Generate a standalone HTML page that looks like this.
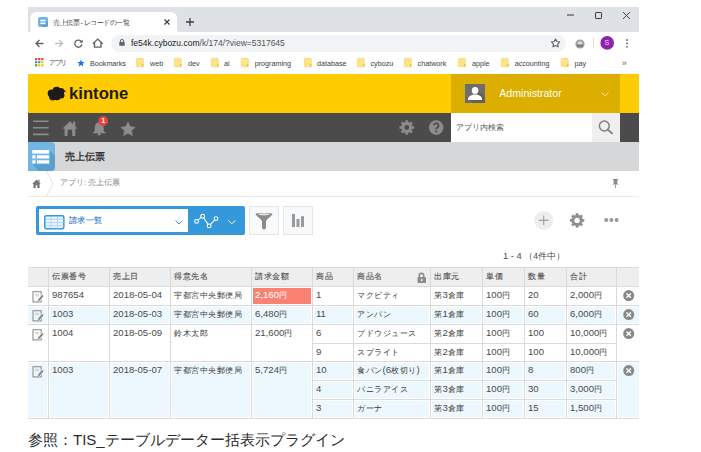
<!DOCTYPE html>
<html><head><meta charset="utf-8">
<style>
*{margin:0;padding:0;box-sizing:border-box}
html,body{width:701px;height:452px;overflow:hidden;background:#fff;font-family:"Liberation Sans",sans-serif}
.a{position:absolute}
.t{position:absolute;white-space:nowrap;line-height:1}
.j{font-size:8.3px;letter-spacing:0.5px}
.d .j{color:#3a3a3a}
.h .j{-webkit-text-stroke:0.12px #505050}
svg{position:absolute;overflow:visible}
</style></head><body>
<div class="a" style="left:28px;top:7px;width:611px;height:25px;background:#dee1e6"></div>
<svg style="left:0px;top:0px" width="1" height="1"><path d="M30.5 32V18A6 6 0 0 1 36.5 12H171A6 6 0 0 1 177 18V28.5A3.5 3.5 0 0 0 180.5 32Z" fill="#fff"/></svg>
<svg style="left:38px;top:17px" width="10" height="10"><rect x="0" y="0" width="10" height="10" rx="2" fill="#6fb4e4"/><path d="M7.6 3L10 5.5V8A2 2 0 0 1 8 10H5L2.4 7.4H7.6Z" fill="#5a9fd0"/><rect x="2.4" y="2.8" width="5.2" height="1.5" fill="#fff"/><rect x="2.4" y="5.6" width="5.2" height="1.5" fill="#fff"/></svg>
<div class="t" style="left:53px;top:18.8px;font-size:7px;color:#3c4043;letter-spacing:-0.5px">売上伝票 - レコードの一覧</div>
<svg style="left:164px;top:19px" width="6" height="6"><path d="M0.5 0.5L5.5 5.5M5.5 0.5L0.5 5.5" stroke="#3c4043" stroke-width="1.2"/></svg>
<svg style="left:186px;top:18px" width="8" height="8"><path d="M4 0V8M0 4H8" stroke="#3c4043" stroke-width="1.3"/></svg>
<svg style="left:567px;top:14px" width="7" height="2"><path d="M0 1H7" stroke="#333" stroke-width="1"/></svg>
<svg style="left:595px;top:12px" width="7" height="7"><rect x="0.5" y="0.5" width="6" height="6" rx="0.6" fill="none" stroke="#3a3a3a" stroke-width="1"/></svg>
<svg style="left:623px;top:12px" width="7" height="7"><path d="M0 0L7 7M7 0L0 7" stroke="#333" stroke-width="0.9"/></svg>
<div class="a" style="left:28px;top:32px;width:611px;height:23px;background:#fff"></div>
<svg style="left:35px;top:39px" width="9" height="9"><path d="M8.5 4.5H1M4.5 1L1 4.5L4.5 8" fill="none" stroke="#5f6368" stroke-width="1.3"/></svg>
<svg style="left:55px;top:39px" width="9" height="9"><path d="M0 4.5H7.5M4 1L7.5 4.5L4 8" fill="none" stroke="#bdc1c6" stroke-width="1.3"/></svg>
<svg style="left:74px;top:39px" width="9" height="9"><path d="M7.6 3A3.6 3.6 0 1 0 7.9 5.5" fill="none" stroke="#5f6368" stroke-width="1.3"/><path d="M8.6 0.5V3.8H5.3Z" fill="#5f6368"/></svg>
<svg style="left:0px;top:0px" width="1" height="1"><path d="M92.9 43.8L97.75 39.1L102.6 43.8M94.5 42.4V47.1H101V42.4" fill="none" stroke="#5f6368" stroke-width="1.35"/></svg>
<div class="a" style="left:111px;top:35px;width:455px;height:17px;background:#f1f3f4;border-radius:8.5px"></div>
<svg style="left:119px;top:39px" width="6" height="7"><path d="M1.4 3V2A1.6 1.6 0 0 1 4.6 2V3" fill="none" stroke="#5f6368" stroke-width="1"/><rect x="0.3" y="3" width="5.4" height="3.8" rx="0.5" fill="#5f6368"/></svg>
<div class="t" style="left:131px;top:39.3px;font-size:8.5px;color:#202124;">fe54k.cybozu.com<span style="color:#50545a">/k/174/?view=5317645</span></div>
<svg style="left:0px;top:0px" width="1" height="1"><path d="M555.60 38.90 L556.95 41.44 L559.78 41.94 L557.79 44.01 L558.19 46.86 L555.60 45.60 L553.01 46.86 L553.41 44.01 L551.42 41.94 L554.25 41.44Z" fill="none" stroke="#5f6368" stroke-width="1.1" stroke-linejoin="round"/></svg>
<svg style="left:575px;top:38.5px" width="10" height="10"><circle cx="5" cy="5" r="4.6" fill="#9aa0a6"/><circle cx="5" cy="4.6" r="2.4" fill="#dcdcdc"/><rect x="2" y="5.5" width="6" height="2" fill="#777"/></svg>
<div class="a" style="left:593px;top:38px;width:1px;height:10px;background:#dadce0"></div>
<svg style="left:0px;top:0px" width="1" height="1"><circle cx="607.2" cy="42.9" r="6.8" fill="#8e24aa"/></svg>
<div class="t" style="left:604.6px;top:39.3px;font-size:7px;color:#efdcf5;">S</div>
<svg style="left:626px;top:39px" width="2" height="9"><circle cx="1" cy="1" r="0.9" fill="#5f6368"/><circle cx="1" cy="4.4" r="0.9" fill="#5f6368"/><circle cx="1" cy="7.8" r="0.9" fill="#5f6368"/></svg>
<div class="a" style="left:28px;top:55px;width:611px;height:19px;background:#fff"></div>
<svg style="left:35px;top:58.3px" width="9" height="9"><rect x="0.0" y="0.0" width="2.2" height="2.2" fill="#ea4335"/><rect x="3.1" y="0.0" width="2.2" height="2.2" fill="#ea4335"/><rect x="6.2" y="0.0" width="2.2" height="2.2" fill="#ea4335"/><rect x="0.0" y="3.1" width="2.2" height="2.2" fill="#34a853"/><rect x="3.1" y="3.1" width="2.2" height="2.2" fill="#4285f4"/><rect x="6.2" y="3.1" width="2.2" height="2.2" fill="#fbbc04"/><rect x="0.0" y="6.2" width="2.2" height="2.2" fill="#34a853"/><rect x="3.1" y="6.2" width="2.2" height="2.2" fill="#fbbc04"/><rect x="6.2" y="6.2" width="2.2" height="2.2" fill="#fbbc04"/></svg>
<div class="t" style="left:49.3px;top:59.4px;font-size:7px;color:#3c4043;letter-spacing:-1.6px">アプリ</div>
<svg style="left:76.5px;top:58.5px" width="8" height="8"><path d="M4 0.2L5 2.9L7.8 3L5.6 4.8L6.4 7.6L4 6L1.6 7.6L2.4 4.8L0.2 3L3 2.9Z" fill="#1a73e8"/></svg>
<div class="t" style="left:90px;top:59.6px;font-size:7.2px;color:#3c4043;">Bookmarks</div>
<svg style="left:135.8px;top:58px" width="8" height="9"><rect x="0.3" y="0.3" width="7" height="8.4" rx="0.8" fill="#fde48c" stroke="#f5d35a" stroke-width="0.6"/><rect x="6" y="6" width="1.4" height="2.8" fill="#edc33c"/></svg>
<div class="t" style="left:150px;top:59.6px;font-size:7.2px;color:#3c4043;">web</div>
<svg style="left:174.10000000000002px;top:58px" width="8" height="9"><rect x="0.3" y="0.3" width="7" height="8.4" rx="0.8" fill="#fde48c" stroke="#f5d35a" stroke-width="0.6"/><rect x="6" y="6" width="1.4" height="2.8" fill="#edc33c"/></svg>
<div class="t" style="left:188px;top:59.6px;font-size:7.2px;color:#3c4043;">dev</div>
<svg style="left:211.20000000000002px;top:58px" width="8" height="9"><rect x="0.3" y="0.3" width="7" height="8.4" rx="0.8" fill="#fde48c" stroke="#f5d35a" stroke-width="0.6"/><rect x="6" y="6" width="1.4" height="2.8" fill="#edc33c"/></svg>
<div class="t" style="left:224px;top:59.6px;font-size:7.2px;color:#3c4043;">ai</div>
<svg style="left:241.10000000000002px;top:58px" width="8" height="9"><rect x="0.3" y="0.3" width="7" height="8.4" rx="0.8" fill="#fde48c" stroke="#f5d35a" stroke-width="0.6"/><rect x="6" y="6" width="1.4" height="2.8" fill="#edc33c"/></svg>
<div class="t" style="left:254.7px;top:59.6px;font-size:7.2px;color:#3c4043;">programing</div>
<svg style="left:303.8px;top:58px" width="8" height="9"><rect x="0.3" y="0.3" width="7" height="8.4" rx="0.8" fill="#fde48c" stroke="#f5d35a" stroke-width="0.6"/><rect x="6" y="6" width="1.4" height="2.8" fill="#edc33c"/></svg>
<div class="t" style="left:317px;top:59.6px;font-size:7.2px;color:#3c4043;">database</div>
<svg style="left:357.1px;top:58px" width="8" height="9"><rect x="0.3" y="0.3" width="7" height="8.4" rx="0.8" fill="#fde48c" stroke="#f5d35a" stroke-width="0.6"/><rect x="6" y="6" width="1.4" height="2.8" fill="#edc33c"/></svg>
<div class="t" style="left:370.5px;top:59.6px;font-size:7.2px;color:#3c4043;">cybozu</div>
<svg style="left:403.8px;top:58px" width="8" height="9"><rect x="0.3" y="0.3" width="7" height="8.4" rx="0.8" fill="#fde48c" stroke="#f5d35a" stroke-width="0.6"/><rect x="6" y="6" width="1.4" height="2.8" fill="#edc33c"/></svg>
<div class="t" style="left:417.6px;top:59.6px;font-size:7.2px;color:#3c4043;">chatwork</div>
<svg style="left:457.8px;top:58px" width="8" height="9"><rect x="0.3" y="0.3" width="7" height="8.4" rx="0.8" fill="#fde48c" stroke="#f5d35a" stroke-width="0.6"/><rect x="6" y="6" width="1.4" height="2.8" fill="#edc33c"/></svg>
<div class="t" style="left:472px;top:59.6px;font-size:7.2px;color:#3c4043;">apple</div>
<svg style="left:500.8px;top:58px" width="8" height="9"><rect x="0.3" y="0.3" width="7" height="8.4" rx="0.8" fill="#fde48c" stroke="#f5d35a" stroke-width="0.6"/><rect x="6" y="6" width="1.4" height="2.8" fill="#edc33c"/></svg>
<div class="t" style="left:514.7px;top:59.6px;font-size:7.2px;color:#3c4043;">accounting</div>
<svg style="left:560.8px;top:58px" width="8" height="9"><rect x="0.3" y="0.3" width="7" height="8.4" rx="0.8" fill="#fde48c" stroke="#f5d35a" stroke-width="0.6"/><rect x="6" y="6" width="1.4" height="2.8" fill="#edc33c"/></svg>
<div class="t" style="left:574.6px;top:59.6px;font-size:7.2px;color:#3c4043;">pay</div>
<div class="t" style="left:622px;top:58.5px;font-size:8.5px;color:#5f6368;">»</div>
<div class="a" style="left:28px;top:74px;width:611px;height:39px;background:#ffcc00"></div>
<div class="a" style="left:451px;top:74px;width:169px;height:39px;background:#dbae00"></div>
<svg style="left:0px;top:0px" width="1" height="1"><g fill="#1e1a17"><circle cx="51.6" cy="93.3" r="3.9"/><circle cx="56.6" cy="90.6" r="3.9"/><circle cx="61" cy="91.3" r="3.2"/><circle cx="61.2" cy="95.2" r="3.2"/><circle cx="56.8" cy="96.2" r="4"/><circle cx="52.6" cy="97" r="3.4"/><path d="M61.5 89.6L66.5 90.9L62 93.2Z"/></g></svg>
<div class="t" style="left:69px;top:86px;font-size:16.7px;color:#1f1a17;font-weight:bold">kintone</div>
<svg style="left:465px;top:84px" width="20" height="19"><rect width="20" height="19" fill="#6d6d6d"/><path d="M20 19H10L3 16L13 6L20 13Z" fill="#616161"/><ellipse cx="10.1" cy="6.5" rx="3.3" ry="3.6" fill="#fff"/><path d="M3 15.9C3 12.6 5.5 11.8 8.3 10.6H11.9C14.7 11.8 17.2 12.6 17.2 15.9Z" fill="#fff"/></svg>
<div class="t" style="left:499.3px;top:88px;font-size:10.6px;color:#fff;">Administrator</div>
<svg style="left:601px;top:92px" width="8" height="5"><path d="M0.5 0.5L4 4L7.5 0.5" fill="none" stroke="#f5e6a8" stroke-width="0.9"/></svg>
<div class="a" style="left:28px;top:113px;width:611px;height:29px;background:#4b4b4b"></div>
<svg style="left:33px;top:120px" width="16" height="16"><path d="M0 1.2H15.5M0 7.8H15.5M0 14.4H15.5" stroke="#8c8c8c" stroke-width="1.6"/></svg>
<svg style="left:0px;top:0px" width="1" height="1"><path d="M62.6 128.4L70 121.2L77.4 128.4H75.3V136H72.2V129.8H67.6V136H64.6V128.4Z" fill="#8c8c8c"/><rect x="73.1" y="121.6" width="2.1" height="4.8" fill="#8c8c8c"/></svg>
<svg style="left:0px;top:0px" width="1" height="1"><path d="M99.2 122.3C102.6 122.3 103.7 125.3 103.7 128.3V131L106.2 133.2H92.2L94.7 131V128.3C94.7 125.3 95.8 122.3 99.2 122.3Z" fill="#8c8c8c"/><circle cx="99.2" cy="134.2" r="1.4" fill="#8c8c8c"/></svg>
<svg style="left:0px;top:0px" width="1" height="1"><circle cx="103.2" cy="121" r="4.9" fill="#e5453a"/></svg>
<div class="t" style="left:101.6px;top:117.6px;font-size:6.6px;color:#fff;font-weight:bold">1</div>
<svg style="left:0px;top:0px" width="1" height="1"><path d="M128.00 122.00 L130.17 126.61 L135.23 127.25 L131.52 130.74 L132.47 135.75 L128.00 133.30 L123.53 135.75 L124.48 130.74 L120.77 127.25 L125.83 126.61Z" fill="#8c8c8c" stroke="#8c8c8c" stroke-width="0.5" stroke-linejoin="round"/></svg>
<svg style="left:0px;top:0px" width="1" height="1"><path d="M411.70 125.47 L411.98 126.38 L413.83 126.50 L413.83 128.50 L411.98 128.62 L411.70 129.53 L411.25 130.37 L412.48 131.76 L411.06 133.18 L409.67 131.95 L408.83 132.40 L407.92 132.68 L407.80 134.53 L405.80 134.53 L405.68 132.68 L404.77 132.40 L403.93 131.95 L402.54 133.18 L401.12 131.76 L402.35 130.37 L401.90 129.53 L401.62 128.62 L399.77 128.50 L399.77 126.50 L401.62 126.38 L401.90 125.47 L402.35 124.63 L401.12 123.24 L402.54 121.82 L403.93 123.05 L404.77 122.60 L405.68 122.32 L405.80 120.47 L407.80 120.47 L407.92 122.32 L408.83 122.60 L409.67 123.05 L411.06 121.82 L412.48 123.24 L411.25 124.63Z" fill="#8c8c8c" stroke="#8c8c8c" stroke-width="0.6" stroke-linejoin="round"/><circle cx="406.8" cy="127.5" r="2.4" fill="#4b4b4b"/></svg>
<svg style="left:0px;top:0px" width="1" height="1"><circle cx="436.2" cy="127.6" r="7.3" fill="#8c8c8c"/><path d="M433.9 125.6A2.3 2.3 0 1 1 437.4 127.5C436.6 128 436.2 128.4 436.2 129.5" fill="none" stroke="#4b4b4b" stroke-width="1.7"/><circle cx="436.2" cy="131.6" r="1" fill="#4b4b4b"/></svg>
<div class="a" style="left:451px;top:113px;width:141px;height:29px;background:#fff"></div>
<div class="a" style="left:592px;top:113px;width:28px;height:29px;background:#efefef"></div>
<div class="t" style="left:456.3px;top:123.6px;font-size:8.2px;color:#555;">アプリ内検索</div>
<svg style="left:598px;top:120px" width="16" height="16"><circle cx="6.3" cy="6" r="4.9" fill="none" stroke="#808080" stroke-width="1.5"/><path d="M9.8 9.6L14 13.4" stroke="#808080" stroke-width="1.9" stroke-linecap="round"/></svg>
<div class="a" style="left:28px;top:142px;width:611px;height:29px;background:#d5d7d8"></div>
<svg style="left:28px;top:142px" width="27" height="29"><defs><clipPath id="ci"><path d="M0 0H23A4 4 0 0 1 27 4V25A4 4 0 0 1 23 29H0Z"/></clipPath></defs><g clip-path="url(#ci)"><rect width="27" height="29" fill="#72b7e4"/><path d="M21.3 8L30 16.7V30H12L4.3 22.3H21.3Z" fill="#5b9fcd"/></g><rect x="4.3" y="8" width="17" height="3.6" fill="#fff"/><rect x="4.3" y="13.3" width="3.2" height="3.2" fill="#fff"/><rect x="9" y="13.3" width="12.3" height="3.2" fill="#fff"/><rect x="4.3" y="18.3" width="3.2" height="3.2" fill="#fff"/><rect x="9" y="18.3" width="12.3" height="3.2" fill="#fff"/></svg>
<div class="t" style="left:64.5px;top:151.8px;font-size:9.8px;color:#333;font-weight:bold">売上伝票</div>
<div class="a" style="left:28px;top:171px;width:611px;height:25px;background:#fff"></div>
<div class="a" style="left:28px;top:196px;width:611px;height:1px;background:#ebebeb"></div>
<svg style="left:0px;top:0px" width="1" height="1"><path d="M32.2 184L36.5 179.4L40.8 184H39.6V188H37.3V185.3H35.7V188H33.4V184Z" fill="#777"/><rect x="38.2" y="179.8" width="1.3" height="2.8" fill="#777"/></svg>
<svg style="left:46px;top:171px" width="8" height="26"><path d="M0.5 0L7 12.5L0.5 25" fill="none" stroke="#e3e3e3" stroke-width="1"/></svg>
<div class="t" style="left:60px;top:179px;font-size:8px;color:#888;">アプリ: 売上伝票</div>
<svg style="left:0px;top:0px" width="1" height="1"><path d="M613 179H618V180.2H617.3V183.2L618.5 184.6H612.5L613.7 183.2V180.2H613Z" fill="#8a8a8a"/><rect x="615" y="184.5" width="1" height="3.4" fill="#999"/></svg>
<div class="a" style="left:36px;top:206px;width:209px;height:29px;background:#3498db;border-radius:2px"></div>
<div class="a" style="left:39px;top:209px;width:149px;height:23px;background:#fff"></div>
<svg style="left:43.5px;top:214.5px" width="21" height="15"><rect x="0.8" y="0.8" width="19" height="13" rx="1.5" fill="#eaf4fb" stroke="#3498db" stroke-width="1.5"/><path d="M7 1V14M13.5 1V14M1 4.3H20M1 7.5H20M1 10.7H20" stroke="#9ccbec" stroke-width="0.7"/></svg>
<div class="t" style="left:68.8px;top:216.3px;font-size:8.3px;color:#2f74bd;letter-spacing:0.5px;-webkit-text-stroke:0.1px #2f74bd">請求一覧</div>
<svg style="left:174.5px;top:219.5px" width="8" height="5"><path d="M0.5 0.5L4 4L7.5 0.5" fill="none" stroke="#3498db" stroke-width="1"/></svg>
<svg style="left:194px;top:214px" width="25" height="15"><path d="M2.5 7.4L8.6 2.2L15.1 11.9L22 4.6" fill="none" stroke="#fff" stroke-width="1.1"/><g fill="#3498db" stroke="#fff" stroke-width="1.1"><circle cx="2.5" cy="7.4" r="1.9"/><circle cx="8.6" cy="2.2" r="1.9"/><circle cx="15.1" cy="11.9" r="1.9"/><circle cx="22" cy="4.6" r="1.9"/></g></svg>
<svg style="left:228px;top:219.5px" width="8" height="5"><path d="M0.3 0.3L3.8 3.8L7.3 0.3" fill="none" stroke="#fff" stroke-width="1"/></svg>
<div class="a" style="left:249px;top:206px;width:30px;height:29px;background:#f7f9fa;border:1px solid #e3e7e8"></div>
<svg style="left:255px;top:212px" width="18" height="17"><path d="M0.5 1.8C0.5 0.6 17.5 0.6 17.5 1.8C17.5 3.5 12 7 11 9V15.5A1.2 1.2 0 0 1 7 15.5V9C6 7 0.5 3.5 0.5 1.8Z" fill="#8c8c8c"/><ellipse cx="9" cy="2.3" rx="5.6" ry="1.1" fill="#dedede"/></svg>
<div class="a" style="left:283px;top:206px;width:30px;height:29px;background:#f7f9fa;border:1px solid #e3e7e8"></div>
<svg style="left:292px;top:214px" width="12" height="13"><rect x="0" y="0" width="3" height="13" fill="#9a9a9a"/><rect x="4.5" y="5" width="3" height="8" fill="#9a9a9a"/><rect x="9" y="2.2" width="3" height="10.8" fill="#9a9a9a"/></svg>
<svg style="left:534px;top:211px" width="20" height="20"><circle cx="9.7" cy="9.4" r="9.5" fill="#eeeeee"/><path d="M9.7 4.5V14.3M4.8 9.4H14.6" stroke="#a0a0a0" stroke-width="1.1"/></svg>
<svg style="left:0px;top:0px" width="1" height="1"><path d="M582.09 218.33 L582.38 219.26 L584.03 219.41 L584.03 221.39 L582.38 221.54 L582.09 222.47 L581.64 223.33 L582.70 224.60 L581.30 226.00 L580.03 224.94 L579.17 225.39 L578.24 225.68 L578.09 227.33 L576.11 227.33 L575.96 225.68 L575.03 225.39 L574.17 224.94 L572.90 226.00 L571.50 224.60 L572.56 223.33 L572.11 222.47 L571.82 221.54 L570.17 221.39 L570.17 219.41 L571.82 219.26 L572.11 218.33 L572.56 217.47 L571.50 216.20 L572.90 214.80 L574.17 215.86 L575.03 215.41 L575.96 215.12 L576.11 213.47 L578.09 213.47 L578.24 215.12 L579.17 215.41 L580.03 215.86 L581.30 214.80 L582.70 216.20 L581.64 217.47Z" fill="#8f8f8f" stroke="#8f8f8f" stroke-width="0.6" stroke-linejoin="round"/><circle cx="577.1" cy="220.4" r="2.7" fill="#fff"/></svg>
<svg style="left:603.5px;top:218.4px" width="16" height="4"><circle cx="2.2" cy="2" r="2" fill="#999"/><circle cx="7.4" cy="2" r="2" fill="#999"/><circle cx="12.6" cy="2" r="2" fill="#999"/></svg>
<div class="t" style="left:503px;top:251.8px;font-size:9.3px;color:#4a4a4a;">1 - 4 <span style="font-size:8.5px">（4件中）</span></div>
<div class="a" style="left:28px;top:267px;width:611px;height:19px;background:#eeeeee"></div>
<div class="t h" style="left:52px;top:271.3px;font-size:9.6px;color:#505050;"><span class="j">伝票番号</span></div>
<div class="t h" style="left:113px;top:271.3px;font-size:9.6px;color:#505050;"><span class="j">売上日</span></div>
<div class="t h" style="left:174px;top:271.3px;font-size:9.6px;color:#505050;"><span class="j">得意先名</span></div>
<div class="t h" style="left:255px;top:271.3px;font-size:9.6px;color:#505050;"><span class="j">請求金額</span></div>
<div class="t h" style="left:316px;top:271.3px;font-size:9.6px;color:#505050;"><span class="j">商品</span></div>
<div class="t h" style="left:357px;top:271.3px;font-size:9.6px;color:#505050;"><span class="j">商品名</span></div>
<div class="t h" style="left:434px;top:271.3px;font-size:9.6px;color:#505050;"><span class="j">出庫元</span></div>
<div class="t h" style="left:486px;top:271.3px;font-size:9.6px;color:#505050;"><span class="j">単価</span></div>
<div class="t h" style="left:528px;top:271.3px;font-size:9.6px;color:#505050;"><span class="j">数量</span></div>
<div class="t h" style="left:570px;top:271.3px;font-size:9.6px;color:#505050;"><span class="j">合計</span></div>
<svg style="left:416.5px;top:271.5px" width="10" height="12"><path d="M2.3 5V3.6A2.2 2.2 0 0 1 6.7 3.6V5" fill="none" stroke="#8c8c8c" stroke-width="1.6"/><rect x="0.5" y="5" width="8.5" height="6" rx="0.8" fill="#8c8c8c"/><rect x="4" y="7" width="1.5" height="2.3" fill="#eee"/></svg>
<svg style="left:32px;top:290.8px" width="13" height="12"><rect x="1" y="0.7" width="8.2" height="10.2" fill="#fff" stroke="#8f8f8f" stroke-width="1.1"/><path d="M3 3.4H7.2M3 4.9H7.2" stroke="#c8c8c8" stroke-width="0.9"/><path d="M10.9 4.3L6.4 9.6" stroke="#fff" stroke-width="3.4"/><path d="M10.9 4.3L6.7 9.3" stroke="#858585" stroke-width="1.9"/><path d="M6.1 9L5.5 10.6L7.2 10Z" fill="#858585"/></svg>
<div class="t d" style="left:52px;top:290.2px;font-size:9.6px;color:#4a4a4a;">987654</div>
<div class="t d" style="left:113px;top:290.2px;font-size:9.6px;color:#4a4a4a;">2018-05-04</div>
<div class="t d" style="left:174px;top:290.2px;font-size:9.6px;color:#4a4a4a;"><span class="j">宇都宮中央郵便局</span></div>
<div class="a" style="left:253px;top:288px;width:58px;height:16px;background:#fa8272"></div>
<div class="t" style="left:255px;top:290.2px;font-size:9.6px;color:#fff;">2,160<span class="j">円</span></div>
<div class="t d" style="left:316px;top:290.2px;font-size:9.6px;color:#4a4a4a;">1</div>
<div class="t d" style="left:357px;top:290.2px;font-size:9.6px;color:#4a4a4a;"><span class="j">マクビティ</span></div>
<div class="t d" style="left:434px;top:290.2px;font-size:9.6px;color:#4a4a4a;"><span class="j">第</span>3<span class="j">倉庫</span></div>
<div class="t d" style="left:486px;top:290.2px;font-size:9.6px;color:#4a4a4a;">100<span class="j">円</span></div>
<div class="t d" style="left:528px;top:290.2px;font-size:9.6px;color:#4a4a4a;">20</div>
<div class="t d" style="left:570px;top:290.2px;font-size:9.6px;color:#4a4a4a;">2,000<span class="j">円</span></div>
<svg style="left:622.5px;top:290.3px" width="12" height="12"><circle cx="5.7" cy="5.6" r="5.5" fill="#888"/><path d="M3.5 3.4L7.9 7.8M7.9 3.4L3.5 7.8" stroke="#fff" stroke-width="1.4"/></svg>
<div class="a" style="left:28px;top:305px;width:611px;height:19px;background:#ecf8fe"></div>
<div class="a" style="left:47px;top:305px;width:3px;height:19px;background:#fff"></div>
<div class="a" style="left:108px;top:305px;width:3px;height:19px;background:#fff"></div>
<div class="a" style="left:169px;top:305px;width:3px;height:19px;background:#fff"></div>
<div class="a" style="left:250px;top:305px;width:3px;height:19px;background:#fff"></div>
<div class="a" style="left:311px;top:305px;width:3px;height:19px;background:#fff"></div>
<div class="a" style="left:352px;top:305px;width:3px;height:19px;background:#fff"></div>
<div class="a" style="left:429px;top:305px;width:3px;height:19px;background:#fff"></div>
<div class="a" style="left:481px;top:305px;width:3px;height:19px;background:#fff"></div>
<div class="a" style="left:523px;top:305px;width:3px;height:19px;background:#fff"></div>
<div class="a" style="left:565px;top:305px;width:3px;height:19px;background:#fff"></div>
<div class="a" style="left:615px;top:305px;width:3px;height:19px;background:#fff"></div>
<div class="a" style="left:28px;top:305px;width:611px;height:2px;background:#fff"></div>
<div class="a" style="left:28px;top:323px;width:611px;height:1px;background:#fff"></div>
<svg style="left:32px;top:309.8px" width="13" height="12"><rect x="1" y="0.7" width="8.2" height="10.2" fill="#ecf8fe" stroke="#8f8f8f" stroke-width="1.1"/><path d="M3 3.4H7.2M3 4.9H7.2" stroke="#c8c8c8" stroke-width="0.9"/><path d="M10.9 4.3L6.4 9.6" stroke="#ecf8fe" stroke-width="3.4"/><path d="M10.9 4.3L6.7 9.3" stroke="#858585" stroke-width="1.9"/><path d="M6.1 9L5.5 10.6L7.2 10Z" fill="#858585"/></svg>
<div class="t d" style="left:52px;top:309.2px;font-size:9.6px;color:#4a4a4a;">1003</div>
<div class="t d" style="left:113px;top:309.2px;font-size:9.6px;color:#4a4a4a;">2018-05-03</div>
<div class="t d" style="left:174px;top:309.2px;font-size:9.6px;color:#4a4a4a;"><span class="j">宇都宮中央郵便局</span></div>
<div class="t d" style="left:255px;top:309.2px;font-size:9.6px;color:#4a4a4a;">6,480<span class="j">円</span></div>
<div class="t d" style="left:316px;top:309.2px;font-size:9.6px;color:#4a4a4a;">11</div>
<div class="t d" style="left:357px;top:309.2px;font-size:9.6px;color:#4a4a4a;"><span class="j">アンパン</span></div>
<div class="t d" style="left:434px;top:309.2px;font-size:9.6px;color:#4a4a4a;"><span class="j">第</span>1<span class="j">倉庫</span></div>
<div class="t d" style="left:486px;top:309.2px;font-size:9.6px;color:#4a4a4a;">100<span class="j">円</span></div>
<div class="t d" style="left:528px;top:309.2px;font-size:9.6px;color:#4a4a4a;">60</div>
<div class="t d" style="left:570px;top:309.2px;font-size:9.6px;color:#4a4a4a;">6,000<span class="j">円</span></div>
<svg style="left:622.5px;top:309.3px" width="12" height="12"><circle cx="5.7" cy="5.6" r="5.5" fill="#888"/><path d="M3.5 3.4L7.9 7.8M7.9 3.4L3.5 7.8" stroke="#fff" stroke-width="1.4"/></svg>
<svg style="left:32px;top:328.8px" width="13" height="12"><rect x="1" y="0.7" width="8.2" height="10.2" fill="#fff" stroke="#8f8f8f" stroke-width="1.1"/><path d="M3 3.4H7.2M3 4.9H7.2" stroke="#c8c8c8" stroke-width="0.9"/><path d="M10.9 4.3L6.4 9.6" stroke="#fff" stroke-width="3.4"/><path d="M10.9 4.3L6.7 9.3" stroke="#858585" stroke-width="1.9"/><path d="M6.1 9L5.5 10.6L7.2 10Z" fill="#858585"/></svg>
<div class="t d" style="left:52px;top:328.2px;font-size:9.6px;color:#4a4a4a;">1004</div>
<div class="t d" style="left:113px;top:328.2px;font-size:9.6px;color:#4a4a4a;">2018-05-09</div>
<div class="t d" style="left:174px;top:328.2px;font-size:9.6px;color:#4a4a4a;"><span class="j">鈴木太郎</span></div>
<div class="t d" style="left:255px;top:328.2px;font-size:9.6px;color:#4a4a4a;">21,600<span class="j">円</span></div>
<div class="t d" style="left:316px;top:328.2px;font-size:9.6px;color:#4a4a4a;">6</div>
<div class="t d" style="left:357px;top:328.2px;font-size:9.6px;color:#4a4a4a;"><span class="j">ブドウジュース</span></div>
<div class="t d" style="left:434px;top:328.2px;font-size:9.6px;color:#4a4a4a;"><span class="j">第</span>2<span class="j">倉庫</span></div>
<div class="t d" style="left:486px;top:328.2px;font-size:9.6px;color:#4a4a4a;">100<span class="j">円</span></div>
<div class="t d" style="left:528px;top:328.2px;font-size:9.6px;color:#4a4a4a;">100</div>
<div class="t d" style="left:570px;top:328.2px;font-size:9.6px;color:#4a4a4a;">10,000<span class="j">円</span></div>
<div class="t d" style="left:316px;top:347.2px;font-size:9.6px;color:#4a4a4a;">9</div>
<div class="t d" style="left:357px;top:347.2px;font-size:9.6px;color:#4a4a4a;"><span class="j">スプライト</span></div>
<div class="t d" style="left:434px;top:347.2px;font-size:9.6px;color:#4a4a4a;"><span class="j">第</span>2<span class="j">倉庫</span></div>
<div class="t d" style="left:486px;top:347.2px;font-size:9.6px;color:#4a4a4a;">100<span class="j">円</span></div>
<div class="t d" style="left:528px;top:347.2px;font-size:9.6px;color:#4a4a4a;">100</div>
<div class="t d" style="left:570px;top:347.2px;font-size:9.6px;color:#4a4a4a;">10,000<span class="j">円</span></div>
<div class="a" style="left:312px;top:343px;width:304px;height:1px;background:#dadada"></div>
<svg style="left:622.5px;top:328.3px" width="12" height="12"><circle cx="5.7" cy="5.6" r="5.5" fill="#888"/><path d="M3.5 3.4L7.9 7.8M7.9 3.4L3.5 7.8" stroke="#fff" stroke-width="1.4"/></svg>
<div class="a" style="left:28px;top:361px;width:611px;height:57px;background:#ecf8fe"></div>
<div class="a" style="left:47px;top:361px;width:3px;height:57px;background:#fff"></div>
<div class="a" style="left:108px;top:361px;width:3px;height:57px;background:#fff"></div>
<div class="a" style="left:169px;top:361px;width:3px;height:57px;background:#fff"></div>
<div class="a" style="left:250px;top:361px;width:3px;height:57px;background:#fff"></div>
<div class="a" style="left:311px;top:361px;width:3px;height:57px;background:#fff"></div>
<div class="a" style="left:352px;top:361px;width:3px;height:57px;background:#fff"></div>
<div class="a" style="left:429px;top:361px;width:3px;height:57px;background:#fff"></div>
<div class="a" style="left:481px;top:361px;width:3px;height:57px;background:#fff"></div>
<div class="a" style="left:523px;top:361px;width:3px;height:57px;background:#fff"></div>
<div class="a" style="left:565px;top:361px;width:3px;height:57px;background:#fff"></div>
<div class="a" style="left:615px;top:361px;width:3px;height:57px;background:#fff"></div>
<div class="a" style="left:28px;top:361px;width:611px;height:2px;background:#fff"></div>
<div class="a" style="left:28px;top:417px;width:611px;height:1px;background:#fff"></div>
<div class="a" style="left:312px;top:379px;width:304px;height:3px;background:#fff"></div>
<div class="a" style="left:312px;top:398px;width:304px;height:3px;background:#fff"></div>
<svg style="left:32px;top:365.8px" width="13" height="12"><rect x="1" y="0.7" width="8.2" height="10.2" fill="#ecf8fe" stroke="#8f8f8f" stroke-width="1.1"/><path d="M3 3.4H7.2M3 4.9H7.2" stroke="#c8c8c8" stroke-width="0.9"/><path d="M10.9 4.3L6.4 9.6" stroke="#ecf8fe" stroke-width="3.4"/><path d="M10.9 4.3L6.7 9.3" stroke="#858585" stroke-width="1.9"/><path d="M6.1 9L5.5 10.6L7.2 10Z" fill="#858585"/></svg>
<div class="t d" style="left:52px;top:365.2px;font-size:9.6px;color:#4a4a4a;">1003</div>
<div class="t d" style="left:113px;top:365.2px;font-size:9.6px;color:#4a4a4a;">2018-05-07</div>
<div class="t d" style="left:174px;top:365.2px;font-size:9.6px;color:#4a4a4a;"><span class="j">宇都宮中央郵便局</span></div>
<div class="t d" style="left:255px;top:365.2px;font-size:9.6px;color:#4a4a4a;">5,724<span class="j">円</span></div>
<div class="t d" style="left:316px;top:365.2px;font-size:9.6px;color:#4a4a4a;">10</div>
<div class="t d" style="left:357px;top:365.2px;font-size:9.6px;color:#4a4a4a;"><span class="j">食パン</span>(6<span class="j">枚切り</span>)</div>
<div class="t d" style="left:434px;top:365.2px;font-size:9.6px;color:#4a4a4a;"><span class="j">第</span>1<span class="j">倉庫</span></div>
<div class="t d" style="left:486px;top:365.2px;font-size:9.6px;color:#4a4a4a;">100<span class="j">円</span></div>
<div class="t d" style="left:528px;top:365.2px;font-size:9.6px;color:#4a4a4a;">8</div>
<div class="t d" style="left:570px;top:365.2px;font-size:9.6px;color:#4a4a4a;">800<span class="j">円</span></div>
<div class="t d" style="left:316px;top:384.2px;font-size:9.6px;color:#4a4a4a;">4</div>
<div class="t d" style="left:357px;top:384.2px;font-size:9.6px;color:#4a4a4a;"><span class="j">バニラアイス</span></div>
<div class="t d" style="left:434px;top:384.2px;font-size:9.6px;color:#4a4a4a;"><span class="j">第</span>3<span class="j">倉庫</span></div>
<div class="t d" style="left:486px;top:384.2px;font-size:9.6px;color:#4a4a4a;">100<span class="j">円</span></div>
<div class="t d" style="left:528px;top:384.2px;font-size:9.6px;color:#4a4a4a;">30</div>
<div class="t d" style="left:570px;top:384.2px;font-size:9.6px;color:#4a4a4a;">3,000<span class="j">円</span></div>
<div class="a" style="left:312px;top:380px;width:304px;height:1px;background:#dadada"></div>
<div class="t d" style="left:316px;top:403.2px;font-size:9.6px;color:#4a4a4a;">3</div>
<div class="t d" style="left:357px;top:403.2px;font-size:9.6px;color:#4a4a4a;"><span class="j">ガーナ</span></div>
<div class="t d" style="left:434px;top:403.2px;font-size:9.6px;color:#4a4a4a;"><span class="j">第</span>3<span class="j">倉庫</span></div>
<div class="t d" style="left:486px;top:403.2px;font-size:9.6px;color:#4a4a4a;">100<span class="j">円</span></div>
<div class="t d" style="left:528px;top:403.2px;font-size:9.6px;color:#4a4a4a;">15</div>
<div class="t d" style="left:570px;top:403.2px;font-size:9.6px;color:#4a4a4a;">1,500<span class="j">円</span></div>
<div class="a" style="left:312px;top:399px;width:304px;height:1px;background:#dadada"></div>
<svg style="left:622.5px;top:365.3px" width="12" height="12"><circle cx="5.7" cy="5.6" r="5.5" fill="#888"/><path d="M3.5 3.4L7.9 7.8M7.9 3.4L3.5 7.8" stroke="#fff" stroke-width="1.4"/></svg>
<div class="a" style="left:28px;top:267px;width:611px;height:1px;background:#dadada"></div>
<div class="a" style="left:28px;top:286px;width:611px;height:1px;background:#dadada"></div>
<div class="a" style="left:28px;top:305px;width:611px;height:1px;background:#dadada"></div>
<div class="a" style="left:28px;top:324px;width:611px;height:1px;background:#dadada"></div>
<div class="a" style="left:28px;top:361px;width:611px;height:1px;background:#dadada"></div>
<div class="a" style="left:28px;top:418px;width:611px;height:1px;background:#dadada"></div>
<div class="a" style="left:48px;top:267px;width:1px;height:152px;background:#dadada"></div>
<div class="a" style="left:109px;top:267px;width:1px;height:152px;background:#dadada"></div>
<div class="a" style="left:170px;top:267px;width:1px;height:152px;background:#dadada"></div>
<div class="a" style="left:251px;top:267px;width:1px;height:152px;background:#dadada"></div>
<div class="a" style="left:312px;top:267px;width:1px;height:152px;background:#dadada"></div>
<div class="a" style="left:353px;top:267px;width:1px;height:152px;background:#dadada"></div>
<div class="a" style="left:430px;top:267px;width:1px;height:152px;background:#dadada"></div>
<div class="a" style="left:482px;top:267px;width:1px;height:152px;background:#dadada"></div>
<div class="a" style="left:524px;top:267px;width:1px;height:152px;background:#dadada"></div>
<div class="a" style="left:566px;top:267px;width:1px;height:152px;background:#dadada"></div>
<div class="a" style="left:616px;top:267px;width:1px;height:152px;background:#dadada"></div>
<div class="t" style="left:28px;top:432px;font-size:15px;color:#2a2a2a;">参照：TIS_テーブルデーター括表示プラグイン</div>
</body></html>
